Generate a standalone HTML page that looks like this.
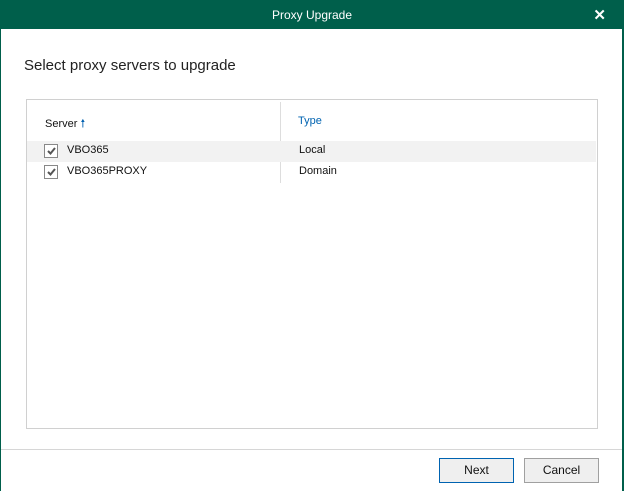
<!DOCTYPE html>
<html><head><style>
*{margin:0;padding:0;box-sizing:border-box}
body{width:624px;height:491px;background:#005f4b;font-family:"Liberation Sans",sans-serif;position:relative;overflow:hidden}
.win{position:absolute;left:1px;top:29px;width:621px;height:462px;background:#fff}
.title{position:absolute;top:0;left:0;width:624px;height:29px;color:#fff;font-size:12px;text-align:center;line-height:30px}
.x{position:absolute;right:18px;top:6px;color:#fff;font-size:15px;font-weight:bold}
h1{position:absolute;left:24px;top:57px;font-size:15px;font-weight:normal;color:#222}
.box{position:absolute;left:26px;top:99px;width:572px;height:330px;border:1px solid #d0d0d0;background:#fff}
.t{position:absolute;font-size:11px;color:#111}
.cb{position:absolute;width:14px;height:14px;border:1px solid #888;background:#fff}
.cb svg{position:absolute;left:1px;top:1px}
.foot{position:absolute;left:1px;top:449px;width:621px;border-top:1px solid #d6d6d6}
.btn{position:absolute;height:25px;width:75px;background:#efefef;border:1px solid #a0a0a0;font-size:12px;text-align:center;line-height:23px;color:#111}
</style></head><body>
<div class="title">Proxy Upgrade</div><div class="x">✕</div>
<div class="win"></div>
<h1>Select proxy servers to upgrade</h1>
<div class="box">
 <div style="position:absolute;left:253px;top:2px;height:81px;border-left:1px solid #ddd"></div>
 <div style="position:absolute;left:0;top:41px;width:569px;height:21px;background:#f2f2f2"></div>
 <div class="t" style="left:18px;top:15px">Server <span style="color:#0060b0">🠕</span></div>
 <div class="t" style="left:271px;top:15px;color:#0063b1">Type</div>
 <div class="cb" style="left:17px;top:44px"><svg width="10" height="10"><path d="M2 5 L4.5 7.5 L9 2" stroke="#555" stroke-width="2" fill="none"/></svg></div>
 <div class="t" style="left:40px;top:44px">VBO365</div>
 <div class="t" style="left:272px;top:44px">Local</div>
 <div class="cb" style="left:17px;top:65px"><svg width="10" height="10"><path d="M2 5 L4.5 7.5 L9 2" stroke="#555" stroke-width="2" fill="none"/></svg></div>
 <div class="t" style="left:40px;top:65px">VBO365PROXY</div>
 <div class="t" style="left:272px;top:65px">Domain</div>
</div>
<div class="foot"></div>
<div class="btn" style="left:439px;top:458px;border-color:#0063b1">Next</div>
<div class="btn" style="left:524px;top:458px">Cancel</div>
</body></html>
